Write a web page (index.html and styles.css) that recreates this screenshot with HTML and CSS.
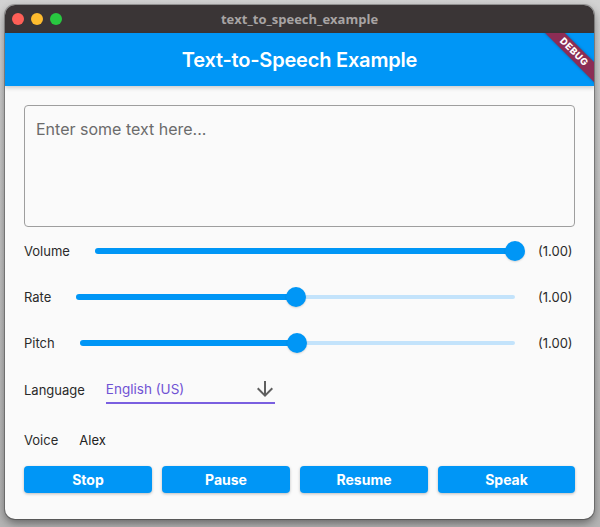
FILE: index.html
```html
<!DOCTYPE html>
<html>
<head>
<meta charset="utf-8">
<link rel="stylesheet" href="styles.css">
</head>
<body>
<div class="window">
  <div class="titlebar">
    <div class="lights">
      <span class="light red"></span>
      <span class="light yellow"></span>
      <span class="light green"></span>
    </div>
    <div class="wtitle">text_to_speech_example</div>
    <div></div>
  </div>
  <div class="appbar">
    <div class="apptitle">Text-to-Speech Example</div>
    <div class="debug">DEBUG</div>
  </div>
  <div class="content">
    <div class="textfield"><span class="placeholder">Enter some text here...</span></div>

    <div class="row row-volume">
      <span class="label">Volume</span>
      <div class="slider">
        <div class="track">
          <div class="inactive"></div>
          <div class="active" style="width:100%"></div>
          <div class="thumb" style="left:100%"></div>
        </div>
      </div>
      <span class="value">(1.00)</span>
    </div>

    <div class="row row-rate">
      <span class="label">Rate</span>
      <div class="slider">
        <div class="track">
          <div class="inactive"></div>
          <div class="active" style="width:50%"></div>
          <div class="thumb" style="left:50%"></div>
        </div>
      </div>
      <span class="value">(1.00)</span>
    </div>

    <div class="row row-pitch">
      <span class="label">Pitch</span>
      <div class="slider">
        <div class="track">
          <div class="inactive"></div>
          <div class="active" style="width:50%"></div>
          <div class="thumb" style="left:50%"></div>
        </div>
      </div>
      <span class="value">(1.00)</span>
    </div>

    <div class="row row-lang">
      <span class="label">Language</span>
      <div class="dropdown">
        <span class="dd-text">English (US)</span>
        <svg class="dd-icon" viewBox="0 0 24 24" width="24" height="24"><path d="M20 12l-1.41-1.41L13 16.17V4h-2v12.17l-5.58-5.59L4 12l8 8 8-8z" fill="#5f5f5f"/></svg>
      </div>
    </div>

    <div class="row row-voice">
      <span class="label">Voice</span>
      <span class="voice-name">Alex</span>
    </div>

    <div class="buttons">
      <div class="btn">Stop</div>
      <div class="btn">Pause</div>
      <div class="btn">Resume</div>
      <div class="btn">Speak</div>
    </div>
  </div>
</div>
</body>
</html>
```
FILE: styles.css
```css
html, body {
  margin: 0;
  padding: 0;
}
body {
  width: 600px;
  height: 527px;
  background: linear-gradient(180deg, #d2d2d2 0%, #b4b4b4 100%);
  overflow: hidden;
  font-family: Inter, "Liberation Sans", sans-serif;
}
.window {
  margin: 5px 0 0 5px;
  width: 589px;
  height: 514px;
  border-radius: 10px;
  overflow: hidden;
  background: #fafafa;
  box-shadow: 0 4px 10px rgba(0,0,0,0.45), 0 0 0 1px rgba(0,0,0,0.25);
  display: flex;
  flex-direction: column;
  position: relative;
}
.titlebar {
  height: 28px;
  flex: none;
  background: #3a3536;
  display: grid;
  grid-template-columns: 1fr auto 1fr;
  align-items: center;
}
.lights {
  display: flex;
  gap: 7px;
  padding-left: 7px;
}
.light {
  width: 12px;
  height: 12px;
  border-radius: 50%;
  display: block;
}
.red { background: #fe5f57; }
.yellow { background: #febc2e; }
.green { background: #28c840; }
.wtitle {
  color: #a8a4a4;
  font-size: 13px;
  font-weight: 700;
  font-family: "Open Sans", Inter, sans-serif;
}
.appbar {
  height: 53px;
  flex: none;
  background: #0096f6;
  display: flex;
  align-items: center;
  justify-content: center;
  position: relative;
  overflow: hidden;
  box-shadow: 0 2px 4px rgba(0,0,0,0.18);
  z-index: 1;
}
.apptitle {
  color: #fff;
  font-size: 20px;
  font-weight: 600;
  letter-spacing: -0.2px;
}
.debug {
  position: absolute;
  width: 40px;
  height: 14px;
  left: 549px;
  top: 12px;
  transform: rotate(45deg);
  color: #fff;
  font-size: 9.5px;
  font-weight: 800;
  line-height: 14px;
  text-align: center;
  letter-spacing: 0.5px;
  z-index: 0;
}
.debug::before {
  content: "";
  position: absolute;
  left: -40px;
  right: -40px;
  top: 0;
  bottom: 0;
  background: #8c2d55;
  box-shadow: 0 0 3px rgba(0,0,0,0.3);
  z-index: -1;
}
.content {
  padding: 19px 19px 0 19px;
  display: flex;
  flex-direction: column;
  color: #222;
  font-size: 13px;
}
.textfield {
  height: 122px;
  box-sizing: border-box;
  border: 1px solid #9e9e9e;
  border-radius: 4px;
  padding: 13px 11px;
}
.placeholder {
  color: #6b6b6b;
  font-size: 16px;
}
.row {
  display: flex;
  align-items: center;
}
.row-volume { height: 47px; }
.row-rate, .row-pitch { height: 46px; }
.row-lang { height: 48px; }
.row-voice { height: 52px; }
.label {
  color: #2a2a2a;
}
.slider {
  flex: 1;
  padding: 0 23px 0 25px;
}
.track {
  position: relative;
  height: 6px;
}
.inactive {
  position: absolute;
  left: 0;
  right: 0;
  top: 1px;
  height: 4px;
  border-radius: 2px;
  background: #c3e3fb;
}
.active {
  position: absolute;
  left: 0;
  top: 0;
  height: 6px;
  border-radius: 3px;
  background: #0096f6;
}
.thumb {
  position: absolute;
  top: 3px;
  width: 20px;
  height: 20px;
  margin: -10px 0 0 -10px;
  border-radius: 50%;
  background: #0096f6;
  box-shadow: 0 1px 2px rgba(0,0,0,0.15);
}
.value {
  color: #2a2a2a;
  width: 37px;
}
.dropdown {
  margin-left: 21px;
  width: 169px;
  height: 28px;
  box-sizing: border-box;
  border-bottom: 2px solid #7a5fe0;
  display: flex;
  align-items: center;
  justify-content: space-between;
}
.dd-text {
  color: #7052d4;
  font-size: 13.5px;
}
.dd-icon {
  display: block;
  margin-right: -2px;
}
.voice-name {
  margin-left: 21px;
}
.buttons {
  display: grid;
  grid-template-columns: 128px 128px 128px 1fr;
  gap: 10px;
}
.btn {
  height: 27px;
  background: #0096f6;
  border-radius: 4px;
  color: #fff;
  font-weight: 700;
  font-size: 14px;
  display: flex;
  align-items: center;
  justify-content: center;
  box-shadow: 0 1px 3px rgba(0,0,0,0.25);
}
```
